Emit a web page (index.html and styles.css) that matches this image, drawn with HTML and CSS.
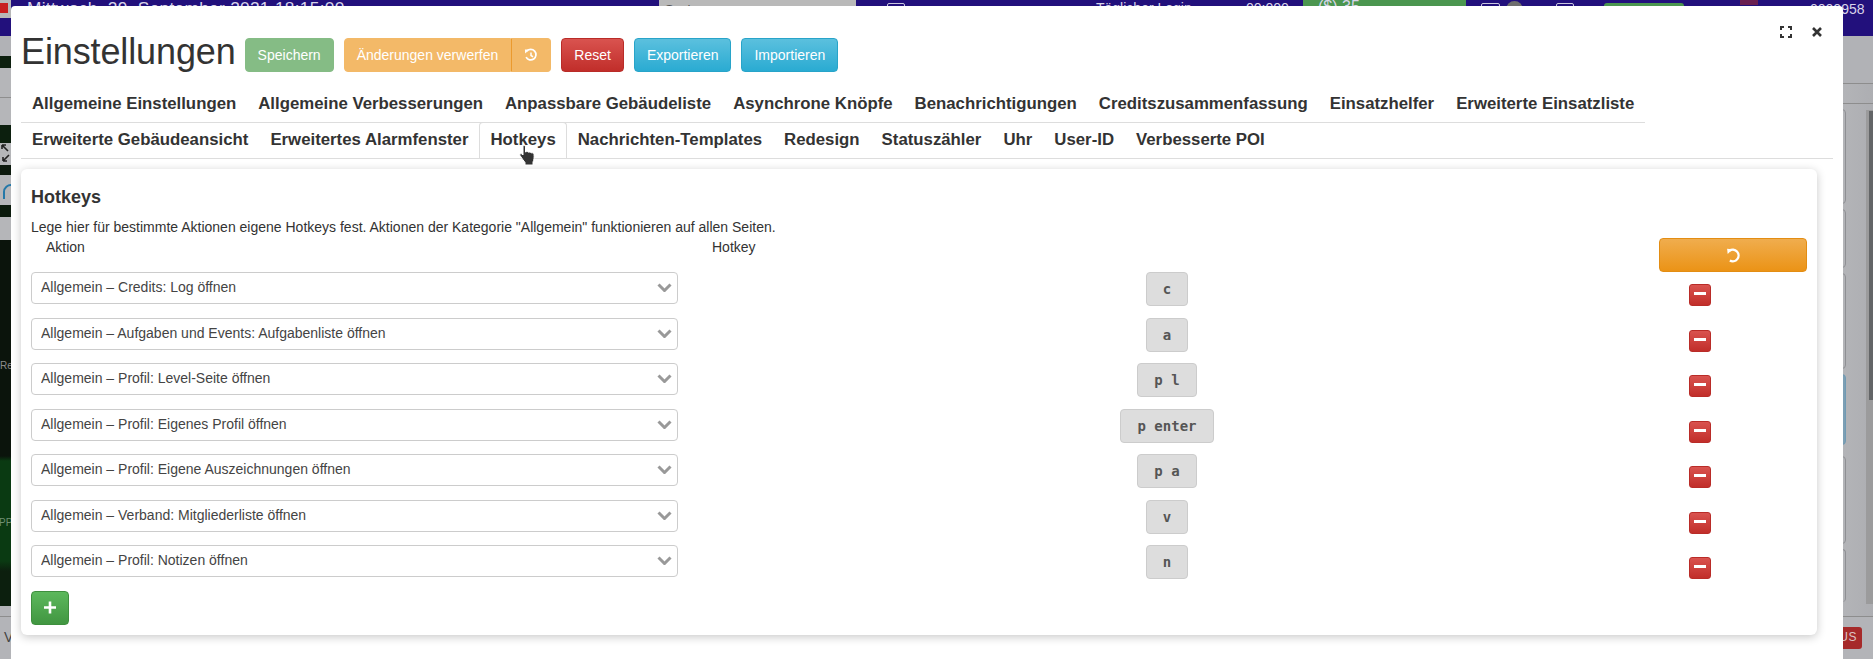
FILE: index.html
```html
<!DOCTYPE html>
<html lang="de">
<head>
    <meta charset="UTF-8">
    <meta name="viewport" content="width=device-width, initial-scale=1.0">
    <title>Einstellungen</title>
    <link rel="stylesheet" href="styles.css">
</head>
<body>
    <!-- page behind the dialog -->
    <div class="backdrop">
        <div class="topbar">
            <span class="top-logo"><span class="top-logo-red"></span></span>
            <span class="top-date">Mittwoch, 29. September 2021 18:15:00</span>
            <span class="top-search">Suchen</span>
            <span class="top-box top-box-a"></span>
            <span class="top-daily">Täglicher Login</span>
            <span class="top-clock">00:000</span>
            <span class="top-credits">($) 35</span>
            <span class="top-box top-box-b"></span>
            <span class="top-dot"></span>
            <span class="top-box top-box-c"></span>
            <span class="top-level">LSS Manager</span>
            <span class="top-red"></span>
            <span class="top-number">0000958</span>
        </div>
        <div class="behind">
            <div class="map-strip">
                <svg class="map-arrows" viewBox="0 0 9 18" width="9" height="18"><path d="M1 1l6 6M1 1h4M1 1v4M8 11l-6 6M2 17h4M2 17v-4" fill="none" stroke="#222" stroke-width="1.6"/></svg>
                <svg class="map-arc" viewBox="0 0 10 18" width="10" height="18"><path d="M2 17V10a7 7 0 0 1 8-7" fill="none" stroke="#2478a8" stroke-width="2"/></svg>
                <span class="map-label map-label-re">Re</span>
                <span class="map-label map-label-pp">PP</span>
            </div>
            <div class="side-strip">
                <div class="side-boxes">
                    <div class="side-box side-box-1"></div>
                    <div class="side-box side-box-2"></div>
                    <div class="side-box side-box-3"></div>
                    <div class="side-box side-box-blue"></div>
                    <div class="side-box side-box-4"></div>
                    <div class="side-box side-box-5"></div>
                </div>
                <div class="side-panel"><div class="side-panel-dark"></div></div>
            </div>
        </div>
        <div class="footer-strip">
            <span class="footer-v">V</span>
            <span class="footer-btn">STATUS</span>
        </div>
    </div>

    <div class="modal">
        <div class="modal-head">
            <h1>Einstellungen</h1>
            <button class="btn btn-save">Speichern</button>
            <div class="btn-group">
                <button class="btn btn-discard">Änderungen verwerfen</button>
                <button class="btn btn-discard btn-history">
                    <svg viewBox="0 0 16 16" width="16" height="16"><path d="M3.2 3.600A6 6 0 1 1 2.400 10.500" fill="none" stroke="#fff" stroke-width="2"/><path d="M1 1.600l5 .2-4.600 4.600z" fill="#fff"/><path d="M8 5v3.600l2.400 1.400" fill="none" stroke="#fff" stroke-width="1.700"/></svg>
                </button>
            </div>
            <button class="btn btn-reset">Reset</button>
            <button class="btn btn-info">Exportieren</button>
            <button class="btn btn-info">Importieren</button>
            <div class="modal-tools">
                <svg viewBox="0 0 12 12" width="12" height="12"><path d="M1 4V1h3M8 1h3v3M11 8v3H8M4 11H1V8" fill="none" stroke="#333" stroke-width="2"/></svg>
                <svg viewBox="0 0 10 10" width="10" height="10"><path d="M1 1l8 8M9 1l-8 8" fill="none" stroke="#333" stroke-width="2.600"/></svg>
            </div>
        </div>

        <ul class="tabs">
            <li><a>Allgemeine Einstellungen</a></li>
            <li><a>Allgemeine Verbesserungen</a></li>
            <li><a>Anpassbare Gebäudeliste</a></li>
            <li><a>Asynchrone Knöpfe</a></li>
            <li><a>Benachrichtigungen</a></li>
            <li><a>Creditszusammenfassung</a></li>
            <li><a>Einsatzhelfer</a></li>
            <li><a>Erweiterte Einsatzliste</a></li>
            <li><a>Erweiterte Gebäudeansicht</a></li>
            <li><a>Erweitertes Alarmfenster</a></li>
            <li class="active"><a>Hotkeys</a></li>
            <li><a>Nachrichten-Templates</a></li>
            <li><a>Redesign</a></li>
            <li><a>Statuszähler</a></li>
            <li><a>Uhr</a></li>
            <li><a>User-ID</a></li>
            <li><a>Verbesserte POI</a></li>
        </ul>

        <div class="panel">
            <h3>Hotkeys</h3>
            <p class="desc">Lege hier für bestimmte Aktionen eigene Hotkeys fest. Aktionen der Kategorie "Allgemein" funktionieren auf allen Seiten.</p>

            <div class="hk-row hk-head">
                <span class="hk-title-action">Aktion</span>
                <span class="hk-title-key">Hotkey</span>
                <button class="btn btn-warning">
                    <svg viewBox="0 0 14 14" width="15" height="15"><path d="M3.2 2.600A5.400 5.400 0 1 1 3.600 11.700" fill="none" stroke="#fff" stroke-width="2.200"/><path d="M1 .6l5 .6L1.600 5.600z" fill="#fff"/></svg>
                </button>
            </div>

            <div class="hk-row">
                <div class="select-wrap"><select><option>Allgemein – Credits: Log öffnen</option></select><svg class="chevron" viewBox="0 0 15 9" width="15" height="9"><path d="M1.500 1.500l6 6 6-6" fill="none" stroke="#999" stroke-width="3"/></svg></div>
                <div class="hk-key"><kbd>c</kbd></div>
                <button class="btn-remove"></button>
            </div>
            <div class="hk-row">
                <div class="select-wrap"><select><option>Allgemein – Aufgaben und Events: Aufgabenliste öffnen</option></select><svg class="chevron" viewBox="0 0 15 9" width="15" height="9"><path d="M1.500 1.500l6 6 6-6" fill="none" stroke="#999" stroke-width="3"/></svg></div>
                <div class="hk-key"><kbd>a</kbd></div>
                <button class="btn-remove"></button>
            </div>
            <div class="hk-row">
                <div class="select-wrap"><select><option>Allgemein – Profil: Level-Seite öffnen</option></select><svg class="chevron" viewBox="0 0 15 9" width="15" height="9"><path d="M1.500 1.500l6 6 6-6" fill="none" stroke="#999" stroke-width="3"/></svg></div>
                <div class="hk-key"><kbd>p l</kbd></div>
                <button class="btn-remove"></button>
            </div>
            <div class="hk-row">
                <div class="select-wrap"><select><option>Allgemein – Profil: Eigenes Profil öffnen</option></select><svg class="chevron" viewBox="0 0 15 9" width="15" height="9"><path d="M1.500 1.500l6 6 6-6" fill="none" stroke="#999" stroke-width="3"/></svg></div>
                <div class="hk-key"><kbd>p enter</kbd></div>
                <button class="btn-remove"></button>
            </div>
            <div class="hk-row">
                <div class="select-wrap"><select><option>Allgemein – Profil: Eigene Auszeichnungen öffnen</option></select><svg class="chevron" viewBox="0 0 15 9" width="15" height="9"><path d="M1.500 1.500l6 6 6-6" fill="none" stroke="#999" stroke-width="3"/></svg></div>
                <div class="hk-key"><kbd>p a</kbd></div>
                <button class="btn-remove"></button>
            </div>
            <div class="hk-row">
                <div class="select-wrap"><select><option>Allgemein – Verband: Mitgliederliste öffnen</option></select><svg class="chevron" viewBox="0 0 15 9" width="15" height="9"><path d="M1.500 1.500l6 6 6-6" fill="none" stroke="#999" stroke-width="3"/></svg></div>
                <div class="hk-key"><kbd>v</kbd></div>
                <button class="btn-remove"></button>
            </div>
            <div class="hk-row">
                <div class="select-wrap"><select><option>Allgemein – Profil: Notizen öffnen</option></select><svg class="chevron" viewBox="0 0 15 9" width="15" height="9"><path d="M1.500 1.500l6 6 6-6" fill="none" stroke="#999" stroke-width="3"/></svg></div>
                <div class="hk-key"><kbd>n</kbd></div>
                <button class="btn-remove"></button>
            </div>

            <button class="btn btn-add">
                <svg viewBox="0 0 12 12" width="13" height="13"><path d="M6 0v12M0 6h12" stroke="#fff" stroke-width="2.600"/></svg>
            </button>
        </div>

        <!-- mouse pointer caught in the screenshot -->
        <svg class="hand" viewBox="0 0 20 22" width="20" height="22"><path d="M5 1.500c1.300-.8 2.500 0 2.500 1.500v5c1.500-.8 2.500-.5 3 .3 1.200-.5 2.200-.2 2.700.6 1.200-.4 2.600.1 2.800 1.500.3 2.500.1 5.600-1 7.600v3H7v-2.500c-1.500-2-3.500-4.500-5-7-.7-1.300.8-2.600 2-1.500l1 1z" fill="#333" stroke="#fff" stroke-width="1"/></svg>
    </div>
</body>
</html>
```

FILE: styles.css
```css
* {
    box-sizing: border-box;
}
html, body {
    margin: 0;
    padding: 0;
}
body {
    position: relative;
    width: 1873px;
    height: 659px;
    overflow: hidden;
    font-family: "Liberation Sans", Arial, sans-serif;
    font-size: 14px;
    line-height: 20px;
    color: #333;
    background-color: #b1b2b6;
}

/* page behind the dialog */
.backdrop {
    position: absolute;
    inset: 0;
    display: flex;
    flex-direction: column;
}
.topbar {
    display: flex;
    flex: 0 0 36px;
    background-color: #22107c;
    color: #d8d4ea;
    overflow: hidden;
    white-space: nowrap;
}
.top-logo {
    width: 11px;
    height: 18px;
    padding: 3px 3px 0 0;
    background-color: #b7b7b7;
}
.top-logo-red {
    display: block;
    width: 8px;
    height: 10px;
    background-color: #c81e1e;
}
.top-date {
    margin: -2px 0 0 16px;
    width: 632px;
    font-size: 17.3px;
    letter-spacing: 0.3px;
}
.top-search {
    width: 197px;
    height: 20px;
    padding-left: 6px;
    background-color: #b9b9b9;
    color: #555;
    font-size: 13px;
}
.top-box {
    height: 12px;
    margin-top: 3px;
    border: 1px solid #c9c6de;
    border-radius: 2px;
}
.top-box-a {
    width: 18px;
    margin-left: 31px;
}
.top-daily {
    margin: -2px 0 0 191px;
    width: 150px;
    font-size: 14px;
}
.top-clock {
    margin-top: -2px;
    width: 57px;
}
.top-credits {
    width: 163px;
    height: 36px;
    padding-left: 15px;
    background-color: #4b964f;
    line-height: 14px;
    font-size: 16px;
}
.top-box-b {
    width: 19px;
    margin-left: 15px;
}
.top-dot {
    width: 17px;
    height: 17px;
    margin: 1px 0 0 6px;
    border-radius: 50%;
    background-color: #6e6e6e;
}
.top-box-c {
    width: 18px;
    margin-left: 33px;
}
.top-level {
    margin: 3px 0 0 30px;
    width: 80px;
    height: 20px;
    padding-left: 6px;
    background-color: #4b964f;
    border-radius: 3px;
    font-size: 11px;
    font-weight: bold;
    line-height: 16px;
}
.top-red {
    width: 18px;
    height: 5px;
    margin-left: 56px;
    background-color: #6a1f50;
}
.top-number {
    margin: -1px 0 0 52px;
    font-size: 14px;
}
.behind {
    display: flex;
    justify-content: space-between;
    flex: 0 0 580px;
}
.map-strip {
    position: relative;
    width: 11px;
    background: linear-gradient(to bottom,
        #b1b2b6 0 20px, #0c1f0e 20px 32px, #b5b6b9 32px 61px, #8e8e8e 61px 62px, #b5b6b9 62px 89px,
        #0c1f0e 89px 107px, #b5b6b9 107px 129px, #0d1a0e 129px 139px, #b5b6b9 139px 169px,
        #0b1a0c 169px 181px, #b5b6b9 181px 204px, #0b140c 204px 420px, #0a3a12 425px 525px,
        #0c1f0e 535px 570px, #b3b4b8 570px);
}
.map-arrows {
    position: absolute;
    left: 1px;
    top: 108px;
}
.map-arc {
    position: absolute;
    left: 2px;
    top: 146px;
}
.map-label {
    position: absolute;
    left: 0;
    font-size: 10px;
    color: #8b8b8b;
}
.map-label-re {
    top: 320px;
}
.map-label-pp {
    top: 477px;
    left: -1px;
    color: #6f8f72;
}
.side-strip {
    display: flex;
    align-items: flex-start;
    gap: 20px;
    width: 50px;
    margin-top: 47px;
    padding-top: 48px;
    background: linear-gradient(#8d8d8d, #8d8d8d) 0 19px / 100% 1px no-repeat,
        linear-gradient(to right, #b7b8bb, #adaeb2);
    border-top: 1px solid #8d8d8d;
}
.side-boxes {
    display: flex;
    flex-direction: column;
    gap: 5px;
    width: 26px;
    margin: -23px 0 0 -3px;
}
.side-box {
    border: 1px solid #8f9094;
    border-radius: 4px;
}
.side-box-1 { height: 95px; }
.side-box-2 { height: 59px; }
.side-box-3 { height: 96px; }
.side-box-blue { height: 71px; border-color: #6f9ab3; background-color: #7d9fb4; }
.side-box-4 { height: 88px; margin-top: 6px; }
.side-box-5 { height: 53px; border-bottom: none; }
.side-panel {
    width: 7px;
    height: 494px;
    margin-top: -22px;
    padding: 1px 0 0 3px;
    background-color: #9b9b9c;
}
.side-panel-dark {
    height: 289px;
    background-color: #636567;
}
.footer-strip {
    display: flex;
    justify-content: space-between;
    flex: 1;
    padding-top: 10px;
    border-top: 1px solid #8d8d8d;
    background-color: #b3b4b8;
}
.footer-v {
    font-size: 14px;
    padding-left: 4px;
    color: #444;
}
.footer-btn {
    width: 62px;
    height: 22px;
    margin-right: 11px;
    padding-right: 5px;
    text-align: right;
    border-radius: 3px;
    background-color: #a62a2a;
    color: #dcc4c4;
    font-size: 12px;
    letter-spacing: 0.5px;
}

/* dialog */
.modal {
    position: absolute;
    left: 11px;
    top: 6px;
    width: 1832px;
    height: 653px;
    padding: 20px 10px 0;
    background-color: #fff;
    border-radius: 4px 4px 0 0;
}
.modal-head {
    display: flex;
    align-items: flex-start;
    height: 60px;
    gap: 10px;
}
.modal-head .btn {
    margin-top: 12px;
}
h1 {
    margin: 6px -1px 0 0;
    font-size: 36px;
    font-weight: 500;
    letter-spacing: -0.12px;
    line-height: 40px;
    color: #333;
}
.modal-tools {
    display: flex;
    align-items: center;
    gap: 20px;
    margin-left: auto;
    padding-right: 11px;
}
.btn {
    display: inline-flex;
    align-items: center;
    justify-content: center;
    height: 34px;
    padding: 6px 12px;
    font-family: inherit;
    font-size: 14px;
    line-height: 20px;
    color: #fff;
    border: 1px solid transparent;
    border-radius: 4px;
}
.btn-save {
    background-color: #85bc85;
    border-color: #85bc85;
}
.btn-group {
    display: flex;
}
.btn-discard {
    background-color: #f3b968;
    border-color: #f3b968;
    border-radius: 4px 0 0 4px;
}
.btn-history {
    width: 40px;
    border-radius: 0 4px 4px 0;
    border-left-color: #eb9a2e;
}
.btn-reset {
    background: linear-gradient(to bottom, #d9534f, #c12e2a);
    border-color: #b92c28;
}
.btn-info {
    background: linear-gradient(to bottom, #5bc0de, #2aabd2);
    border-color: #28a4c9;
}
.btn-warning {
    grid-column: 4;
    width: 148px;
    margin: 1px 0 0 31px;
    background: linear-gradient(to bottom, #f0ad4e, #eb9316);
    border-color: #e38d13;
}
.btn-add {
    width: 38px;
    background: linear-gradient(to bottom, #5cb85c, #419641);
    border-color: #3e8f3e;
}

/* tabs */
.tabs {
    display: flex;
    flex-wrap: wrap;
    list-style: none;
    margin: 0;
    padding: 0;
    width: 1812px;
    border-bottom: 1px solid #ddd;
}
.tabs li {
    margin-bottom: -1px;
    border-bottom: 1px solid #ddd;
}
.tabs a {
    display: block;
    height: 36px;
    padding: 6px 10px 0;
    border: 1px solid transparent;
    border-bottom: none;
    font-size: 16.8px;
    font-weight: bold;
    line-height: 21px;
    color: #333;
}
.tabs .active a {
    border-color: #ddd;
    border-radius: 4px 4px 0 0;
}

/* hotkeys panel */
.panel {
    width: 1796px;
    height: 466px;
    margin-top: 10px;
    padding: 18px 10px 10px;
    background-color: #fff;
    border-radius: 6px;
    box-shadow: 0 2px 10px rgba(0, 0, 0, 0.22);
}
h3 {
    margin: 0 0 10px;
    font-size: 18px;
    font-weight: bold;
    line-height: 20px;
}
.desc {
    margin: 0;
}
.hk-row {
    display: grid;
    grid-template-columns: 647px 28px 922px 1fr;
    height: 45.5px;
    align-items: start;
}
.hk-head {
    height: 35px;
}
.hk-title-action {
    padding-left: 15px;
}
.hk-title-key {
    grid-column: 3;
    padding-left: 6px;
}
.select-wrap {
    position: relative;
    grid-column: 1;
}
select {
    display: block;
    width: 100%;
    height: 32px;
    padding: 0 30px 2px 9px;
    font-family: inherit;
    font-size: 14px;
    color: #444;
    background-color: #fff;
    border: 1px solid #ccc;
    border-radius: 4px;
    appearance: none;
}
.chevron {
    position: absolute;
    right: 6px;
    top: 11px;
}
.hk-key {
    grid-column: 3;
    text-align: center;
}
kbd {
    display: inline-block;
    height: 34px;
    padding: 0 16px;
    font-family: "DejaVu Sans Mono", "Liberation Mono", monospace;
    font-size: 14px;
    font-weight: bold;
    line-height: 32px;
    color: #555;
    background-color: #ddd;
    border: 1px solid #ccc;
    border-radius: 4px;
}
.btn-remove {
    position: relative;
    grid-column: 4;
    width: 22px;
    height: 22px;
    margin: 12px 0 0 61px;
    padding: 0;
    border: 1px solid #b92c28;
    border-radius: 3px;
    background: linear-gradient(to bottom, #d9534f, #c12e2a);
}
.btn-remove::after {
    content: "";
    position: absolute;
    left: 4px;
    top: 7px;
    width: 12px;
    height: 3px;
    background-color: #fff;
}
.hand {
    position: absolute;
    left: 507px;
    top: 138px;
}
```
